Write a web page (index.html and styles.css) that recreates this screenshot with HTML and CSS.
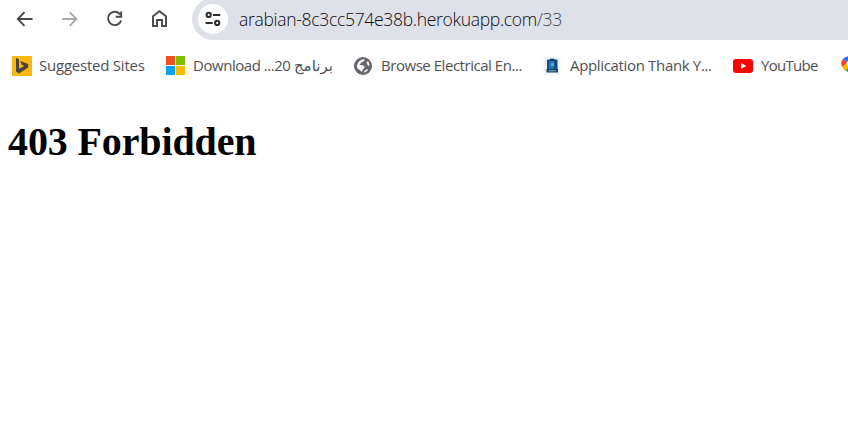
FILE: index.html
```html
<!DOCTYPE html>
<html lang="en">
<head>
<meta charset="utf-8">
<title>403 Forbidden</title>
<link rel="stylesheet" href="styles.css">
</head>
<body>
<header class="toolbar">
  <nav class="controls">
    <svg viewBox="0 0 20 20"><path d="M17.5 10H3M9.500 3.200 2.800 10l6.700 6.800"/></svg>
    <svg class="disabled" viewBox="0 0 20 20"><path d="M2 10h13.500M9.700 3.200 16.400 10l-6.700 6.800"/></svg>
    <svg viewBox="0 0 20 20"><path d="M15.200 5.400A6.700 6.700 0 1 0 16.200 11.500M16.200 2.500v5.200h-5.500"/></svg>
    <svg viewBox="0 0 20 20"><path d="M3 17V7.300L9.500 2.200 16 7.300V17h-4v-6H7v6z"/></svg>
  </nav>
  <div class="address">
    <span class="site-info"><svg viewBox="0 0 18 18"><circle cx="4.700" cy="4.900" r="2.100"/><circle cx="13.200" cy="12.900" r="2.100"/><path d="M9 4.900h7.200M1.500 12.900h7.200"/></svg></span>
    <span class="url">arabian-8c3cc574e38b.herokuapp.com<span class="path">/33</span></span>
  </div>
</header>
<nav class="bookmarks">
  <a class="bookmark suggested"><svg viewBox="0 0 20 20"><path fill="#fbb812" d="M0 0h20v20H0z"/><path fill="#4b4537" d="m4 2 3 1.200v9.600l5.200-2.900-2.500-1.200-1.500-3.600 8 3v3.400L7 17.500l-3-2z"/></svg><span>Suggested Sites</span></a>
  <a class="bookmark download"><svg viewBox="0 0 20 20"><path fill="#f25022" d="M1 0h9v9H1z"/><path fill="#7fba00" d="M11 0h9v9h-9z"/><path fill="#00a4ef" d="M1 10h9v9H1z"/><path fill="#ffb900" d="M11 10h9v9h-9z"/></svg><span>Download ...20 برنامج</span></a>
  <a class="bookmark browse"><svg viewBox="0 0 20 20"><circle cx="10" cy="10" r="9" fill="#64666a"/><path fill="#fff" d="M11.500 3.300c.3 1.500-.6 2.500-2 2.600s-1.200 1.500-2.500 1.900.2 1.500 1.800 1.500 2.700.7 2.700 1.900-.5 1.200-1.300 1.800-.4 1.900-1.300 2.500-1.300-.9-2.200-1.500-2.300-1.300-2.700-2.700.2-3.100 1.500-5.100 3.300-3 6-2.900zM16.500 9.800c-1.200 0-1.900-.4-2.100-1.300s-.9-1-.7-1.900 1-.6 1.200-1.500c1 1.300 1.600 3 1.600 4.700zM10.500 16.500c.4-1.400 1.800-1.600 2.400-2.700s1.800-.5 2.300-.2c-1 1.700-2.600 2.800-4.700 2.900z"/></svg><span>Browse Electrical En...</span></a>
  <a class="bookmark application"><svg viewBox="0 0 20 20"><rect x="1.500" y="1" width="17" height="18" rx="2" fill="#eff2f4"/><rect x="5" y="3.500" width="10.500" height="11" rx="1" fill="#124b87"/><path fill="#1e75b9" d="M7 5h5v8H7z"/><path fill="#0d3e70" d="M8 2.700h4.500V5H8z"/><path fill="#55a9da" d="M9 7h3v3H9z"/><path fill="#174164" d="M4.500 13h11.500v3.500H4.500z"/><path stroke="#84b6ce" d="M6.500 14.800h7.500"/></svg><span>Application Thank Y...</span></a>
  <a class="bookmark youtube"><svg viewBox="0 0 20 20"><rect y="3" width="20" height="14" rx="3" fill="#f00"/><path fill="#fff" d="m8 7 5.300 3L8 13z"/></svg><span>YouTube</span></a>
  <a class="bookmark maps"><svg viewBox="0 0 20 20"><path fill="#34a853" d="M3 11 14 5l3 2c0 6-5 7-7 13-1-3.600-4-5-6-8z"/><path fill="#fbbc04" d="m1.500 9 4-2 5 2-5.500 6C3 13 1.800 11 1.500 9z"/><path fill="#ea4335" d="M3.200 2.800 8 6.500 2 10.500C.7 7.500 1 5 3.200 2.800z"/><path fill="#1a73e8" d="M9 0C6.500.2 4.600 1.200 3.200 2.800L8 7l4-6.500z"/><path fill="#4285f4" d="M9 0c5 0 7 3 8 7l-5-1z"/><circle cx="9.500" cy="7.500" r="3" fill="#fff"/></svg></a>
</nav>
<main><h1>403 Forbidden</h1></main>
</body>
</html>
```
FILE: styles.css
```css
body {
  margin: 0;
  height: 424px;
  overflow: hidden;
  background: #fff;
  font-family: "Open Sans", "Noto Sans", "DejaVu Sans", sans-serif;
}
svg { display: block; flex: none; }
.toolbar { display: flex; height: 40px; }
.controls {
  display: flex;
  gap: 25px;
  width: 177px;
  padding: 9px 0 0 15px;
}
.controls svg {
  width: 20px;
  height: 20px;
  fill: none;
  stroke: #48494b;
  stroke-width: 1.9;
}
.controls .disabled { stroke: #aaa; }
.address {
  display: flex;
  flex: 1;
  align-items: center;
  height: 42px;
  margin-top: -2px;
  padding-left: 6px;
  border-radius: 21px 0 0 21px;
  background: #dfe1e9;
}
.site-info {
  display: flex;
  align-items: center;
  justify-content: center;
  width: 30px;
  height: 30px;
  border-radius: 50%;
  background: #fff;
}
.site-info svg {
  width: 18px;
  height: 18px;
  fill: none;
  stroke: #2a2b2e;
  stroke-width: 2;
}
.url {
  margin: 0 0 0 11px;
  color: #0c0d10;
  font-size: 17.500px;
  font-weight: 300;
  letter-spacing: -.3px;
  white-space: nowrap;
}
.path { color: #44464a; }
.bookmarks {
  display: flex;
  height: 52px;
  padding-left: 12px;
  align-items: center;
}
.bookmark {
  display: flex;
  flex: none;
  align-items: center;
  gap: 7px;
  color: #505154;
  font-size: 15px;
  line-height: 22px;
  white-space: nowrap;
}
.bookmark svg { width: 20px; height: 20px; }
.bookmark span { margin-top: -2px; }
.suggested { width: 153px; letter-spacing: -.23px; }
.download { width: 188px; gap: 8px; letter-spacing: -.46px; }
.browse { width: 189px; gap: 8px; letter-spacing: -.46px; }
.application { width: 191px; gap: 8px; letter-spacing: -.34px; }
.youtube { width: 107px; gap: 8px; letter-spacing: -.7px; }
h1 {
  margin: 27px 8px 0;
  color: #000;
  font: bold 40px/46px "Liberation Serif", serif;
  letter-spacing: -.12px;
}
```
